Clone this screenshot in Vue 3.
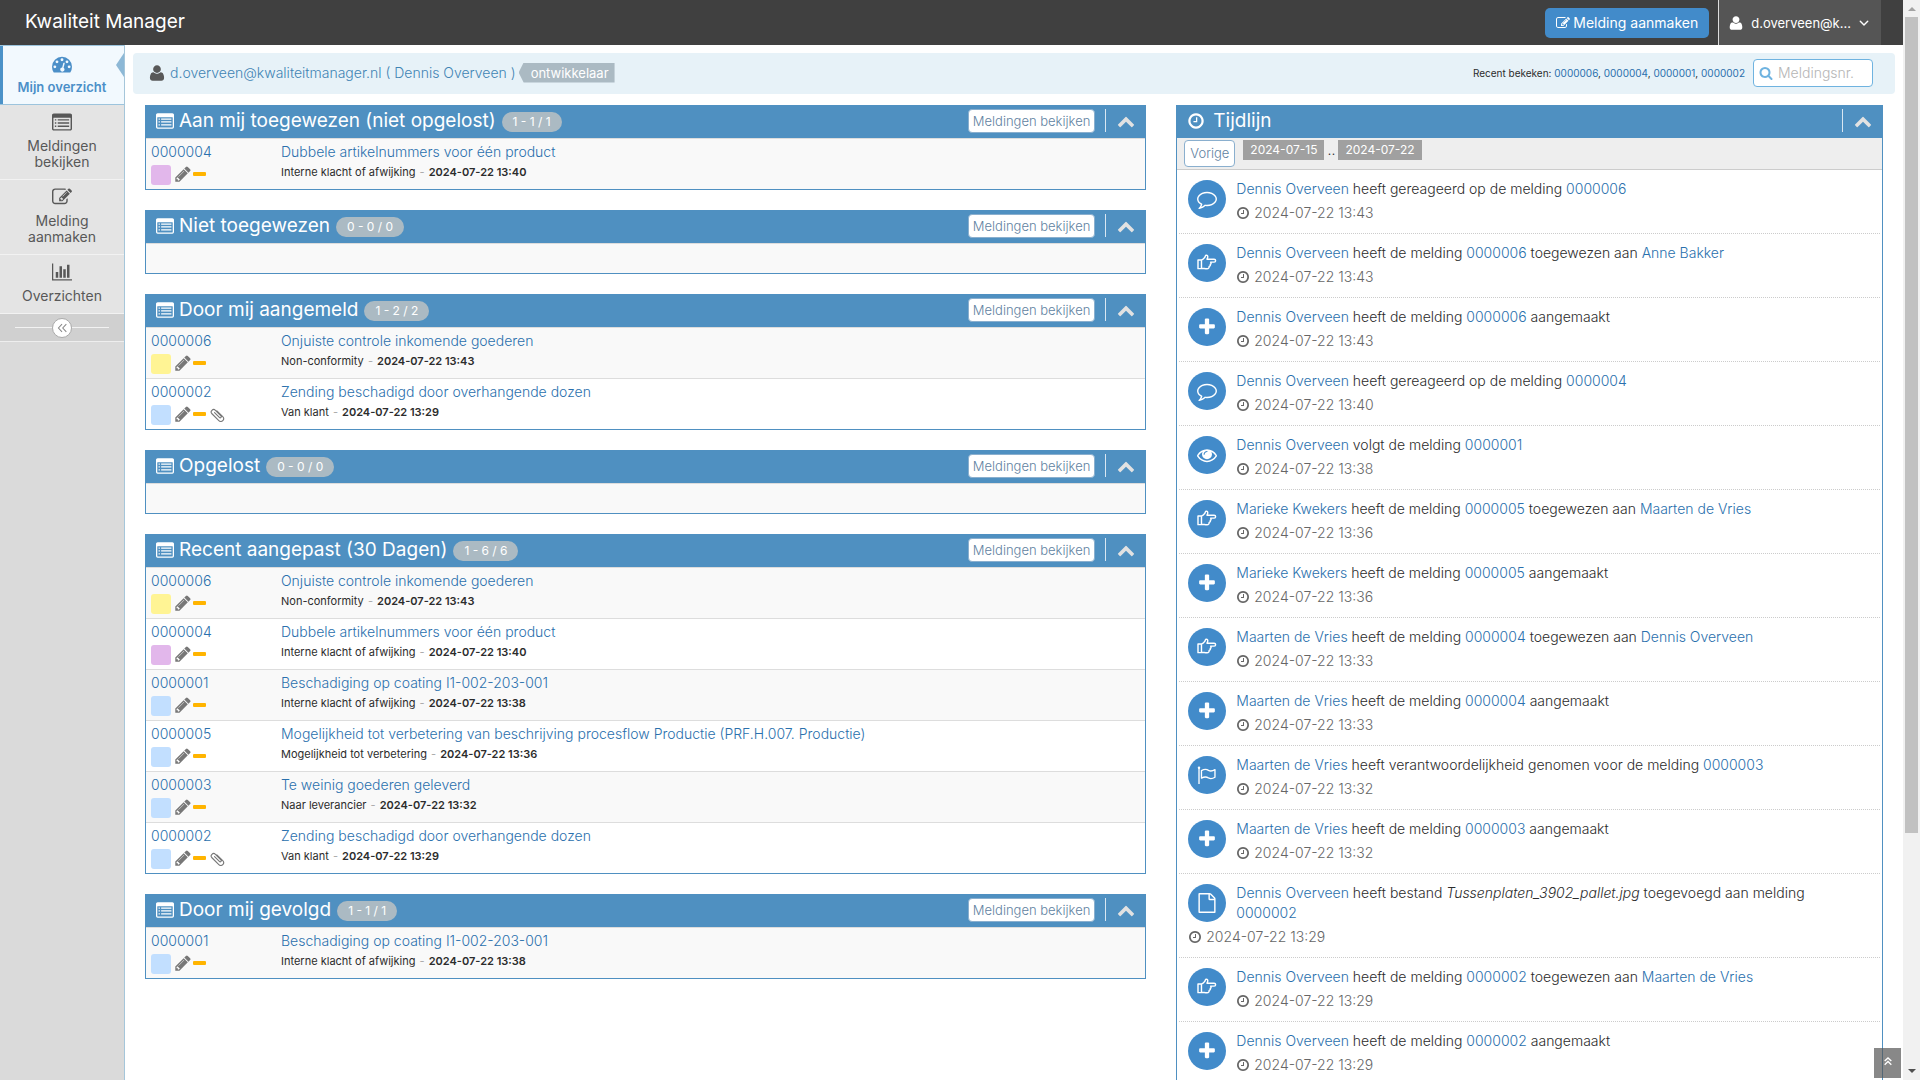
<script setup>
import { h, ref } from "vue";

const icons = {
  pencil:
    '<path d="M491 1536l91-91-235-235-91 91v107h128v128h107zm523-928q0-22-22-22-10 0-17 7l-542 542q-7 7-7 17 0 22 22 22 10 0 17-7l542-542q7-7 7-17zm-54-192l416 416-832 832h-416v-416zm683 96q0 53-37 90l-166 166-416-416 166-165q36-38 90-38 53 0 91 38l235 234q37 39 37 91z"/>',
  edit: '<path d="M888 1184l116-116-152-152-116 116v56h96v96h56zm440-720q-16-16-33 1l-350 350q-17 17-1 33t33-1l350-350q17-17 1-33zm80 594v190q0 119-84.5 203.5t-203.5 84.5h-832q-119 0-203.5-84.5t-84.5-203.5v-832q0-119 84.5-203.5t203.5-84.5h832q63 0 117 25 15 7 18 23 3 17-9 29l-49 49q-14 14-32 8-23-6-45-6h-832q-66 0-113 47t-47 113v832q0 66 47 113t113 47h832q66 0 113-47t47-113v-126q0-13 9-22l64-64q15-15 35-7t20 29zm-96-738l288 288-672 672h-288v-288zm444 132l-92 92-288-288 92-92q28-28 68-28t68 28l152 152q28 28 28 68t-28 68z"/>',
  list: '<path fill-rule="evenodd" d="M160 128h1472q66 0 113 47t47 113v1216q0 66-47 113t-113 47h-1472q-66 0-113-47t-47-113v-1216q0-66 47-113t113-47zM160 512q-32 0-32 32v960q0 32 32 32h1472q32 0 32-32v-960q0-32-32-32z"/><path d="M256 640h128v128h-128zM256 928h128v128h-128zM256 1216h128v128h-128zM512 640h1024v128h-1024zM512 928h1024v128h-1024zM512 1216h1024v128h-1024z"/>',
  clock: '<path d="M1024 544v448q0 14-9 23t-23 9h-320q-14 0-23-9t-9-23v-64q0-14 9-23t23-9h224v-352q0-14 9-23t23-9h64q14 0 23 9t9 23zm416 352q0-148-73-273t-198-198-273-73-273 73-198 198-73 273 73 273 198 198 273 73 273-73 198-198 73-273zm224 0q0 209-103 385.5t-279.5 279.5-385.5 103-385.5-103-279.5-279.5-103-385.5 103-385.5 279.5-279.5 385.5-103 385.5 103 279.5 279.5 103 385.5z"/>',
  user: '<path d="M1600 1405q0 120-73 189.5t-194 69.5h-874q-121 0-194-69.5t-73-189.5q0-53 3.5-103.5t14-109 26.5-108.5 43-97.5 62-81 85.5-53.5 111.5-20q9 0 42 21.5t74.5 48 108 48 133.5 21.5 133.5-21.5 108-48 74.5-48 42-21.5q61 0 111.5 20t85.5 53.5 62 81 43 97.5 26.5 108.5 14 109 3.5 103.5zm-320-893q0 159-112.5 271.5t-271.5 112.5-271.5-112.5-112.5-271.5 112.5-271.5 271.5-112.5 271.5 112.5 112.5 271.5z"/>',
  search:
    '<path d="M1216 832q0-185-131.5-316.5t-316.5-131.5-316.5 131.5-131.5 316.5 131.5 316.5 316.5 131.5 316.5-131.5 131.5-316.5zm512 832q0 52-38 90t-90 38q-54 0-90-38l-343-342q-179 124-399 124-143 0-273.5-55.5t-225-150-150-225-55.5-273.5 55.5-273.5 150-225 225-150 273.5-55.5 273.5 55.5 225 150 150 225 55.5 273.5q0 220-124 399l343 343q37 37 37 90z"/>',
  chevronUp:
    '<path d="M1683 1331l-166 165q-19 19-45 19t-45-19l-531-531-531 531q-19 19-45 19t-45-19l-166-165q-19-19-19-45.5t19-45.5l742-741q19-19 45-19t45 19l742 741q19 19 19 45.5t-19 45.5z"/>',
  angleDown:
    '<path fill="none" stroke="currentColor" stroke-width="210" stroke-linecap="round" stroke-linejoin="round" d="M340 640l556 556 556-556"/>',
  plus: '<path d="M1600 736v192q0 40-28 68t-68 28h-416v416q0 40-28 68t-68 28h-192q-40 0-68-28t-28-68v-416h-416q-40 0-68-28t-28-68v-192q0-40 28-68t68-28h416v-416q0-40 28-68t68-28h192q40 0 68 28t28 68v416h416q40 0 68 28t28 68z"/>',
  comment:
    '<path d="M896 384q-204 0-381.5 69.5t-282 187.5-104.5 255q0 112 71.5 213.5t201.5 175.5l87 50-27 96q-24 91-70 172 152-63 275-171l43-38 57 6q69 8 130 8 204 0 381.5-69.5t282-187.5 104.5-255-104.5-255-282-187.5-381.5-69.5zm896 512q0 174-120 321.5t-326 233-450 85.5q-70 0-145-8-198 175-460 242-49 14-114 22h-5q-15 0-27-10.5t-16-27.5v-1q-3-4-.5-12t2-10 4.5-9.5l6-9 7-8.5 8-9q7-8 31-34.5t34.5-38 31-39.5 32.5-51 27-59 26-76q-157-89-247.5-220t-90.5-281q0-174 120-321.5t326-233 450-85.5 450 85.5 326 233 120 321.5z"/>',
  eye: '<path d="M1664 960q-152-236-381-353 61 104 61 225 0 185-131.5 316.5t-316.5 131.5-316.5-131.5-131.5-316.5q0-121 61-225-229 117-381 353 133 205 333.5 326.5t434.5 121.5 434.5-121.5 333.5-326.5zm-720-384q0-20-14-34t-34-14q-125 0-214.5 89.5t-89.5 214.5q0 20 14 34t34 14 34-14 14-34q0-86 61-147t147-61q20 0 34-14t14-34zm848 384q0 34-20 69-140 230-376.5 368.5t-499.5 138.5-499.5-139-376.5-368q-20-35-20-69t20-69q140-229 376.5-368t499.5-139 499.5 139 376.5 368q20 35 20 69z"/>',
  hand: '<path fill="none" stroke="currentColor" stroke-width="130" stroke-linejoin="round" d="M400 620h-310v780h310zM400 620c150-20 200-120 280-210 70-80 60-190 130-210 120-20 170 60 150 180-10 90-50 110-60 180h640a128 128 0 0 1 0 256h-320c70 60 50 170-30 210 30 80-20 160-100 170 10 130-60 224-190 224-190 0-320-60-500-60"/>',
  flag: '<path fill="none" stroke="currentColor" stroke-width="120" stroke-linejoin="round" d="M180 256v1450M400 500c250-140 430-160 630-20 200 110 380 60 580-60v680c-200 120-380 170-580 60-200-130-380-110-630 20z"/><circle cx="180" cy="240" r="110"/>',
  file: '<path d="M1596 380q28 28 48 76t20 88v1152q0 40-28 68t-68 28h-1344q-40 0-68-28t-28-68v-1600q0-40 28-68t68-28h896q40 0 88 20t76 48zm-444-244v376h376q-10-29-22-41l-313-313q-12-12-41-22zm384 1528v-1024h-416q-40 0-68-28t-28-68v-416h-768v1536h1280z"/>',
  clip: '<path fill="none" stroke="currentColor" stroke-width="125" stroke-linecap="round" d="M620 740l540 540a120 120 0 0 0 176-176L720 480a270 270 0 0 0-390 390l770 770a310 310 0 0 0 440-440L880 540"/>',
  gauge: '<path fill-rule="evenodd" d="M0 1152a896 896 0 0 1 1792 0q0 261-141 483-19 29-54 29H195q-35 0-54-29Q0 1413 0 1152zM128 1152a128 128 0 1 0 256 0 128 128 0 1 0-256 0zM320 704a128 128 0 1 0 256 0 128 128 0 1 0-256 0zM768 512a128 128 0 1 0 256 0 128 128 0 1 0-256 0zM1216 704a128 128 0 1 0 256 0 128 128 0 1 0-256 0zM1408 1152a128 128 0 1 0 256 0 128 128 0 1 0-256 0zM1074 785q-46-12-60 32l-101 382q-60 5-107 43.500t-63 98.500q-20 77 20 146t117 89 146-20 89-117q16-60-6-117t-72-91l101-382q6-26-7-48.500t-37-28.500z"/>',
  chart: '<path d="M640 896v512H384V896zM1024 384v1024H768V384zM2048 1536v128H0V128h128v1408zM1408 640v768h-256V640zM1792 256v1152h-256V256z" transform="scale(.875 1)"/>',
  doubleLeft:
    '<path fill="none" stroke="currentColor" stroke-width="130" d="M900 400l-460 496 460 496M1450 400l-460 496 460 496"/>',
  doubleUp:
    '<path fill="none" stroke="currentColor" stroke-width="250" d="M300 900l596-560 596 560M300 1560l596-560 596 560"/>',
};

const Icon = (props) =>
  h("svg", {
    viewBox: "0 0 1792 1792",
    fill: "currentColor",
    "aria-hidden": "true",
    innerHTML: icons[props.name],
  });
Icon.props = ["name"];

const menu = [
  { label: "Mijn overzicht", icon: "gauge", active: true },
  { label: "Meldingen bekijken", icon: "list" },
  { label: "Melding aanmaken", icon: "edit" },
  { label: "Overzichten", icon: "chart" },
];

const recent = ["0000006", "0000004", "0000001", "0000002"];

const issues = {
  1: {
    id: "0000001",
    title: "Beschadiging op coating I1-002-203-001",
    category: "Interne klacht of afwijking",
    date: "2024-07-22 13:38",
    status: "blue",
  },
  2: {
    id: "0000002",
    title: "Zending beschadigd door overhangende dozen",
    category: "Van klant",
    date: "2024-07-22 13:29",
    status: "blue",
    attachment: true,
  },
  3: {
    id: "0000003",
    title: "Te weinig goederen geleverd",
    category: "Naar leverancier",
    date: "2024-07-22 13:32",
    status: "blue",
  },
  4: {
    id: "0000004",
    title: "Dubbele artikelnummers voor één product",
    category: "Interne klacht of afwijking",
    date: "2024-07-22 13:40",
    status: "purple",
  },
  5: {
    id: "0000005",
    title:
      "Mogelijkheid tot verbetering van beschrijving procesflow Productie (PRF.H.007. Productie)",
    category: "Mogelijkheid tot verbetering",
    date: "2024-07-22 13:36",
    status: "blue",
  },
  6: {
    id: "0000006",
    title: "Onjuiste controle inkomende goederen",
    category: "Non-conformity",
    date: "2024-07-22 13:43",
    status: "yellow",
  },
};

const boxes = ref([
  { title: "Aan mij toegewezen (niet opgelost)", count: "1 - 1 / 1", rows: [4], open: true },
  { title: "Niet toegewezen", count: "0 - 0 / 0", rows: [], open: true },
  { title: "Door mij aangemeld", count: "1 - 2 / 2", rows: [6, 2], open: true },
  { title: "Opgelost", count: "0 - 0 / 0", rows: [], open: true },
  {
    title: "Recent aangepast (30 Dagen)",
    count: "1 - 6 / 6",
    rows: [6, 4, 1, 5, 3, 2],
    open: true,
  },
  { title: "Door mij gevolgd", count: "1 - 1 / 1", rows: [1], open: true },
]);

const timelineOpen = ref(true);
const search = ref("");

const dennis = "Dennis Overveen";
const marieke = "Marieke Kwekers";
const maarten = "Maarten de Vries";

const events = [
  { icon: "comment", who: dennis, text: "heeft gereageerd op de melding", id: "0000006", time: "13:43" },
  { icon: "hand", who: dennis, text: "heeft de melding", id: "0000006", after: "toegewezen aan", to: "Anne Bakker", time: "13:43" },
  { icon: "plus", who: dennis, text: "heeft de melding", id: "0000006", after: "aangemaakt", time: "13:43" },
  { icon: "comment", who: dennis, text: "heeft gereageerd op de melding", id: "0000004", time: "13:40" },
  { icon: "eye", who: dennis, text: "volgt de melding", id: "0000001", time: "13:38" },
  { icon: "hand", who: marieke, text: "heeft de melding", id: "0000005", after: "toegewezen aan", to: maarten, time: "13:36" },
  { icon: "plus", who: marieke, text: "heeft de melding", id: "0000005", after: "aangemaakt", time: "13:36" },
  { icon: "hand", who: maarten, text: "heeft de melding", id: "0000004", after: "toegewezen aan", to: dennis, time: "13:33" },
  { icon: "plus", who: maarten, text: "heeft de melding", id: "0000004", after: "aangemaakt", time: "13:33" },
  { icon: "flag", who: maarten, text: "heeft verantwoordelijkheid genomen voor de melding", id: "0000003", time: "13:32" },
  { icon: "plus", who: maarten, text: "heeft de melding", id: "0000003", after: "aangemaakt", time: "13:32" },
  { icon: "file", who: dennis, text: "heeft bestand", file: "Tussenplaten_3902_pallet.jpg", afterFile: "toegevoegd aan melding", id: "0000002", time: "13:29" },
  { icon: "hand", who: dennis, text: "heeft de melding", id: "0000002", after: "toegewezen aan", to: maarten, time: "13:29" },
  { icon: "plus", who: dennis, text: "heeft de melding", id: "0000002", after: "aangemaakt", time: "13:29" },
];
</script>

<template>
  <div class="app">
    <div class="page">
      <header class="navbar">
        <a href="#" class="brand">Kwaliteit Manager</a>
        <div class="navbar-right">
          <button type="button" class="btn-create">
            <Icon name="edit" class="icon-14" />
            Melding aanmaken
          </button>
          <button type="button" class="user-menu">
            <Icon name="user" class="icon-16" />
            <span>d.overveen@k...</span>
            <Icon name="angleDown" class="icon-12" />
          </button>
        </div>
      </header>

      <div class="columns">
        <nav class="sidebar">
          <a
            v-for="item in menu"
            :key="item.label"
            href="#"
            class="menu-item"
            :class="{ active: item.active }"
          >
            <Icon :name="item.icon" class="icon-20" />
            <span>{{ item.label }}</span>
          </a>
          <div class="collapse">
            <button type="button" aria-label="Menu inklappen">
              <Icon name="doubleLeft" class="icon-14" />
            </button>
          </div>
        </nav>

        <main class="content">
          <div class="breadcrumbs">
            <Icon name="user" class="icon-18 crumb-user" />
            <a href="#">d.overveen@kwaliteitmanager.nl ( Dennis Overveen )</a>
            <span class="role">ontwikkelaar</span>
            <div class="recent">
              Recent bekeken:
              <template v-for="(id, i) in recent" :key="id"
                ><a href="#">{{ id }}</a
                ><template v-if="i < recent.length - 1">, </template></template
              >
            </div>
            <label class="search">
              <Icon name="search" class="icon-14" />
              <input
                v-model="search"
                type="text"
                placeholder="Meldingsnr."
                aria-label="Meldingsnr."
              />
            </label>
          </div>

          <div class="grid">
            <div class="col">
              <section v-for="box in boxes" :key="box.title" class="widget">
                <div class="widget-header">
                  <Icon name="list" class="icon-18" />
                  <h4>{{ box.title }}</h4>
                  <span class="badge">{{ box.count }}</span>
                  <div class="tools">
                    <a href="#" class="btn-view">Meldingen bekijken</a>
                    <button
                      type="button"
                      class="toggle"
                      aria-label="In- of uitklappen"
                      @click="box.open = !box.open"
                    >
                      <Icon name="chevronUp" class="icon-18" />
                    </button>
                  </div>
                </div>
                <table v-if="box.open">
                  <tbody>
                    <tr v-for="n in box.rows" :key="n">
                      <td class="cell-id">
                        <a href="#">{{ issues[n].id }}</a>
                        <div class="marks">
                          <span class="status" :class="issues[n].status"></span>
                          <Icon name="pencil" class="icon-18" />
                          <span class="priority"></span>
                          <Icon v-if="issues[n].attachment" name="clip" class="icon-16 clip" />
                        </div>
                      </td>
                      <td>
                        <a href="#">{{ issues[n].title }}</a>
                        <div class="meta">
                          {{ issues[n].category }} <i>-</i> <b>{{ issues[n].date }}</b>
                        </div>
                      </td>
                    </tr>
                    <tr v-if="!box.rows.length" class="empty">
                      <td></td>
                    </tr>
                  </tbody>
                </table>
              </section>
            </div>

            <div class="col">
              <section class="widget">
                <div class="widget-header">
                  <Icon name="clock" class="icon-18" />
                  <h4 class="timeline-title">Tijdlijn</h4>
                  <div class="tools">
                    <button
                      type="button"
                      class="toggle"
                      aria-label="In- of uitklappen"
                      @click="timelineOpen = !timelineOpen"
                    >
                      <Icon name="chevronUp" class="icon-18" />
                    </button>
                  </div>
                </div>
                <template v-if="timelineOpen">
                  <div class="toolbox">
                    <a href="#" class="btn-prev">Vorige</a>
                    <span class="period">2024-07-15</span>
                    <span class="dots">..</span>
                    <span class="period">2024-07-22</span>
                  </div>
                  <div v-for="(event, i) in events" :key="i" class="event">
                    <span class="event-icon"><Icon :name="event.icon" class="icon-20" /></span>
                    <div class="event-text">
                      <a href="#">{{ event.who }}</a> {{ event.text }}
                      <template v-if="event.file">
                        <em>{{ event.file }}</em> {{ event.afterFile + " " }}
                      </template>
                      <a href="#">{{ event.id }}</a> {{ event.after }}
                      <a v-if="event.to" href="#">{{ event.to }}</a>
                    </div>
                    <div class="event-time">
                      <Icon name="clock" class="icon-14" />
                      2024-07-22 {{ event.time }}
                    </div>
                  </div>
                </template>
              </section>
            </div>
          </div>
        </main>
      </div>
      <button type="button" class="scroll-up" aria-label="Naar boven">
        <Icon name="doubleUp" class="icon-10" />
      </button>
    </div>

    <div class="scrollbar" aria-hidden="true">
      <span class="arrow up"></span>
      <span class="thumb"></span>
      <span class="arrow down"></span>
    </div>
  </div>
</template>

<style>
body {
  margin: 0;
  overflow: hidden;
}
</style>

<style scoped>
.app {
  display: flex;
  height: 100vh;
  overflow: hidden;
  font-family: Inter, "Open Sans", sans-serif;
  font-size: 14px;
  font-weight: 300;
  line-height: 20px;
  color: #2c2c2c;
}

.app * {
  box-sizing: border-box;
}

a {
  color: #2a70ad;
  text-decoration: none;
}

button,
input {
  font: inherit;
}

button {
  padding: 0;
  border: 0;
  cursor: pointer;
}

svg {
  flex: none;
}

.icon-10 {
  width: 10px;
  height: 10px;
}

.icon-12 {
  width: 12px;
  height: 12px;
}

.icon-14 {
  width: 14px;
  height: 14px;
}

.icon-16 {
  width: 16px;
  height: 16px;
}

.icon-18 {
  width: 18px;
  height: 18px;
}

.icon-20 {
  width: 20px;
  height: 20px;
}

.page {
  position: relative;
  display: flex;
  flex-direction: column;
  flex: 1;
  min-width: 0;
}

/* top bar */
.navbar {
  display: flex;
  justify-content: space-between;
  flex: none;
  height: 45px;
  padding: 0 22px 0 25px;
  background: #404040;
  font-weight: 400;
}

.brand {
  font-size: 19px;
  line-height: 44px;
  color: #fff;
}

.navbar-right {
  display: flex;
  align-items: center;
  gap: 9px;
}

.btn-create {
  display: flex;
  align-items: center;
  gap: 3px;
  height: 30px;
  padding: 0 11px;
  border-radius: 5px;
  background: #428bca;
  color: #fff;
}

.user-menu {
  display: flex;
  align-items: center;
  gap: 7px;
  height: 100%;
  padding: 0 11px 0 9px;
  border-left: 1px solid #ddd;
  background: #555;
  color: #fff;
  font-size: 13px;
}

.columns {
  display: flex;
  flex: 1;
  min-height: 0;
}

/* sidebar */
.sidebar {
  flex: none;
  width: 125px;
  border-right: 1px solid #a5c6da;
  background: #dadada;
}

.menu-item {
  position: relative;
  display: flex;
  flex-direction: column;
  align-items: center;
  gap: 6px;
  padding: 7px 20px 9px;
  border-bottom: 1px solid #f2f2f2;
  background: #e4e4e4;
  color: #585858;
  font-weight: 400;
  line-height: 16px;
  text-align: center;
}

.menu-item.active {
  gap: 5px;
  padding: 8px 0 9px;
  border-top: 1px solid #9cc4dd;
  border-bottom-color: #9cc4dd;
  background: #f2f9fe;
  box-shadow: inset 3px 0 #4b92c8;
  color: #4b8fc8;
  font-size: 13px;
  font-weight: 600;
}

.menu-item.active::after {
  content: "";
  position: absolute;
  top: 7px;
  right: 0;
  border: 12px solid transparent;
  border-left: 0;
  border-right: 8px solid #8db8d6;
}

.collapse {
  display: flex;
  align-items: center;
  justify-content: center;
  height: 28px;
  padding: 0 15px;
  border-bottom: 1px solid #eee;
  background: #d0d0d0;
}

.collapse::before,
.collapse::after {
  content: "";
  flex: 1;
  height: 1px;
  background: #f2f2f2;
}

.collapse button {
  display: flex;
  align-items: center;
  justify-content: center;
  width: 20px;
  height: 20px;
  border: 1px solid #aaa;
  border-radius: 50%;
  background: #fff;
  color: #888;
}

/* content */
.content {
  flex: 1;
  min-width: 0;
  padding: 8px 5px 0;
  overflow: hidden;
}

.breadcrumbs {
  display: flex;
  align-items: center;
  height: 41px;
  margin: 0 3px 11px;
  padding: 0 22px 2px 15px;
  border-radius: 4px;
  background: #e7f2f8;
}

.breadcrumbs > a {
  margin-left: 4px;
  color: #3f84b4;
}

.crumb-user {
  color: #585858;
}

.role {
  height: 20px;
  margin-left: 3px;
  padding: 0 6px 0 12px;
  background: #abbac3;
  clip-path: polygon(5px 0, 100% 0, 100% 100%, 5px 100%, 0 50%);
  color: #fff;
  font-size: 13px;
  font-weight: 400;
}

.recent {
  margin-left: auto;
  font-size: 10px;
  font-weight: 400;
}

.search {
  display: flex;
  align-items: center;
  gap: 5px;
  width: 120px;
  height: 28px;
  margin-left: 8px;
  padding: 0 5px;
  border: 1px solid #6fb3e0;
  border-radius: 4px;
  background: #fff;
  color: #6fb3e0;
}

.search input {
  flex: 1;
  min-width: 0;
  padding: 0;
  border: 0;
  outline: 0;
  background: none;
  color: #696969;
}

.search input::placeholder {
  color: #b5b5b5;
}

.grid {
  display: grid;
  grid-template-columns: 7fr 5fr;
}

.col {
  display: flex;
  flex-direction: column;
  gap: 20px;
  min-width: 0;
  padding: 0 15px;
}

.widget {
  border: 1px solid #4f90c1;
  border-top: 0;
  background: #fff;
}

.widget-header {
  display: flex;
  align-items: center;
  height: 33px;
  margin: 0 -1px;
  padding: 0 11px 2px 11px;
  background: #4f90c1;
  color: #fff;
}

.widget-header h4 {
  margin: 0 6px 0 5px;
  font-size: 19px;
  font-weight: 400;
  line-height: 30px;
}

.widget-header .timeline-title {
  margin-left: 8px;
}

.badge {
  height: 20px;
  margin-top: 2px;
  padding: 0 11px;
  border-radius: 10px;
  background: #abbac3;
  font-size: 12px;
  font-weight: 400;
}

.tools {
  display: flex;
  align-items: center;
  gap: 10px;
  margin-left: auto;
}

.btn-view,
.btn-prev {
  border: 1px solid #8aafce;
  border-radius: 4px;
  background: #fff;
  color: #5f82a1;
  font-size: 13px;
}

.btn-view {
  padding: 0 4px;
  line-height: 22px;
}

.btn-prev {
  margin-right: 8px;
  padding: 0 5px;
  line-height: 25px;
}

.toggle {
  display: flex;
  align-items: center;
  height: 23px;
  padding-left: 11px;
  border-left: 1px solid #d9e7f2;
  background: none;
  color: #e2e2e2;
}

table {
  width: 100%;
  border-spacing: 0;
}

tr {
  height: 51px;
}

tr:nth-child(odd) {
  background: #f9f9f9;
}

tr.empty {
  height: 30px;
}

td {
  padding: 3px 0 0 5px;
  border-top: 1px solid #ddd;
  vertical-align: top;
}

.empty td {
  padding: 0;
}

.cell-id {
  width: 130px;
}

.marks {
  display: flex;
  align-items: center;
  height: 20px;
  margin-top: 3px;
  color: #777;
}

.marks svg {
  margin-bottom: 3px;
}

.status {
  width: 20px;
  height: 20px;
  margin-right: 3px;
  border-radius: 3px;
}

.status.blue {
  background: #c2dfff;
}

.status.purple {
  background: #e2b7eb;
}

.status.yellow {
  background: #fff494;
}

.priority {
  width: 13px;
  height: 4px;
  margin: 0 0 2px 1px;
  border-radius: 1px;
  background: #ffb400;
}

.clip {
  margin-left: 3px;
}

.meta {
  font-size: 11px;
  font-weight: 400;
}

.meta i {
  margin: 0 1px;
  color: #aaa;
  font-style: normal;
}

.meta b {
  font-weight: 600;
}

/* timeline */
.toolbox {
  display: flex;
  align-items: flex-start;
  height: 32px;
  padding: 2px 7px;
  border-bottom: 1px solid #ccc;
  background: #eee;
}

.period {
  padding: 0 7px;
  background: #a0a0a0;
  color: #fff;
  font-size: 12px;
  font-weight: 400;
}

.dots {
  padding: 0 3px;
}

.event {
  margin: 0 2px;
  padding: 9px 20px 10px 9px;
  border-bottom: 1px dotted #ccc;
}

.event-icon {
  display: flex;
  align-items: center;
  justify-content: center;
  float: left;
  width: 38px;
  height: 38px;
  margin: 1px 10px 0 0;
  border-radius: 50%;
  background: #428bca;
  color: #fff;
}

.event-time {
  padding-top: 4px;
  color: #666;
}

.event-time svg {
  vertical-align: -2px;
}

.scroll-up {
  position: absolute;
  right: 2px;
  bottom: 2px;
  display: flex;
  align-items: center;
  justify-content: center;
  width: 27px;
  height: 30px;
  padding-bottom: 5px;
  background: rgba(85, 85, 85, 0.7);
  color: #fff;
}

/* page scrollbar */
.scrollbar {
  display: flex;
  flex-direction: column;
  align-items: center;
  flex: none;
  width: 17px;
  background: #f1f1f1;
}

.arrow {
  border: 4px solid transparent;
}

.arrow.up {
  margin: 3px 0 6px;
  border-bottom-color: #a3a3a3;
}

.arrow.down {
  margin: auto 0 3px;
  border-top-color: #505050;
}

.thumb {
  width: 13px;
  height: 78%;
  max-height: 816px;
  background: #c1c1c1;
}
</style>
